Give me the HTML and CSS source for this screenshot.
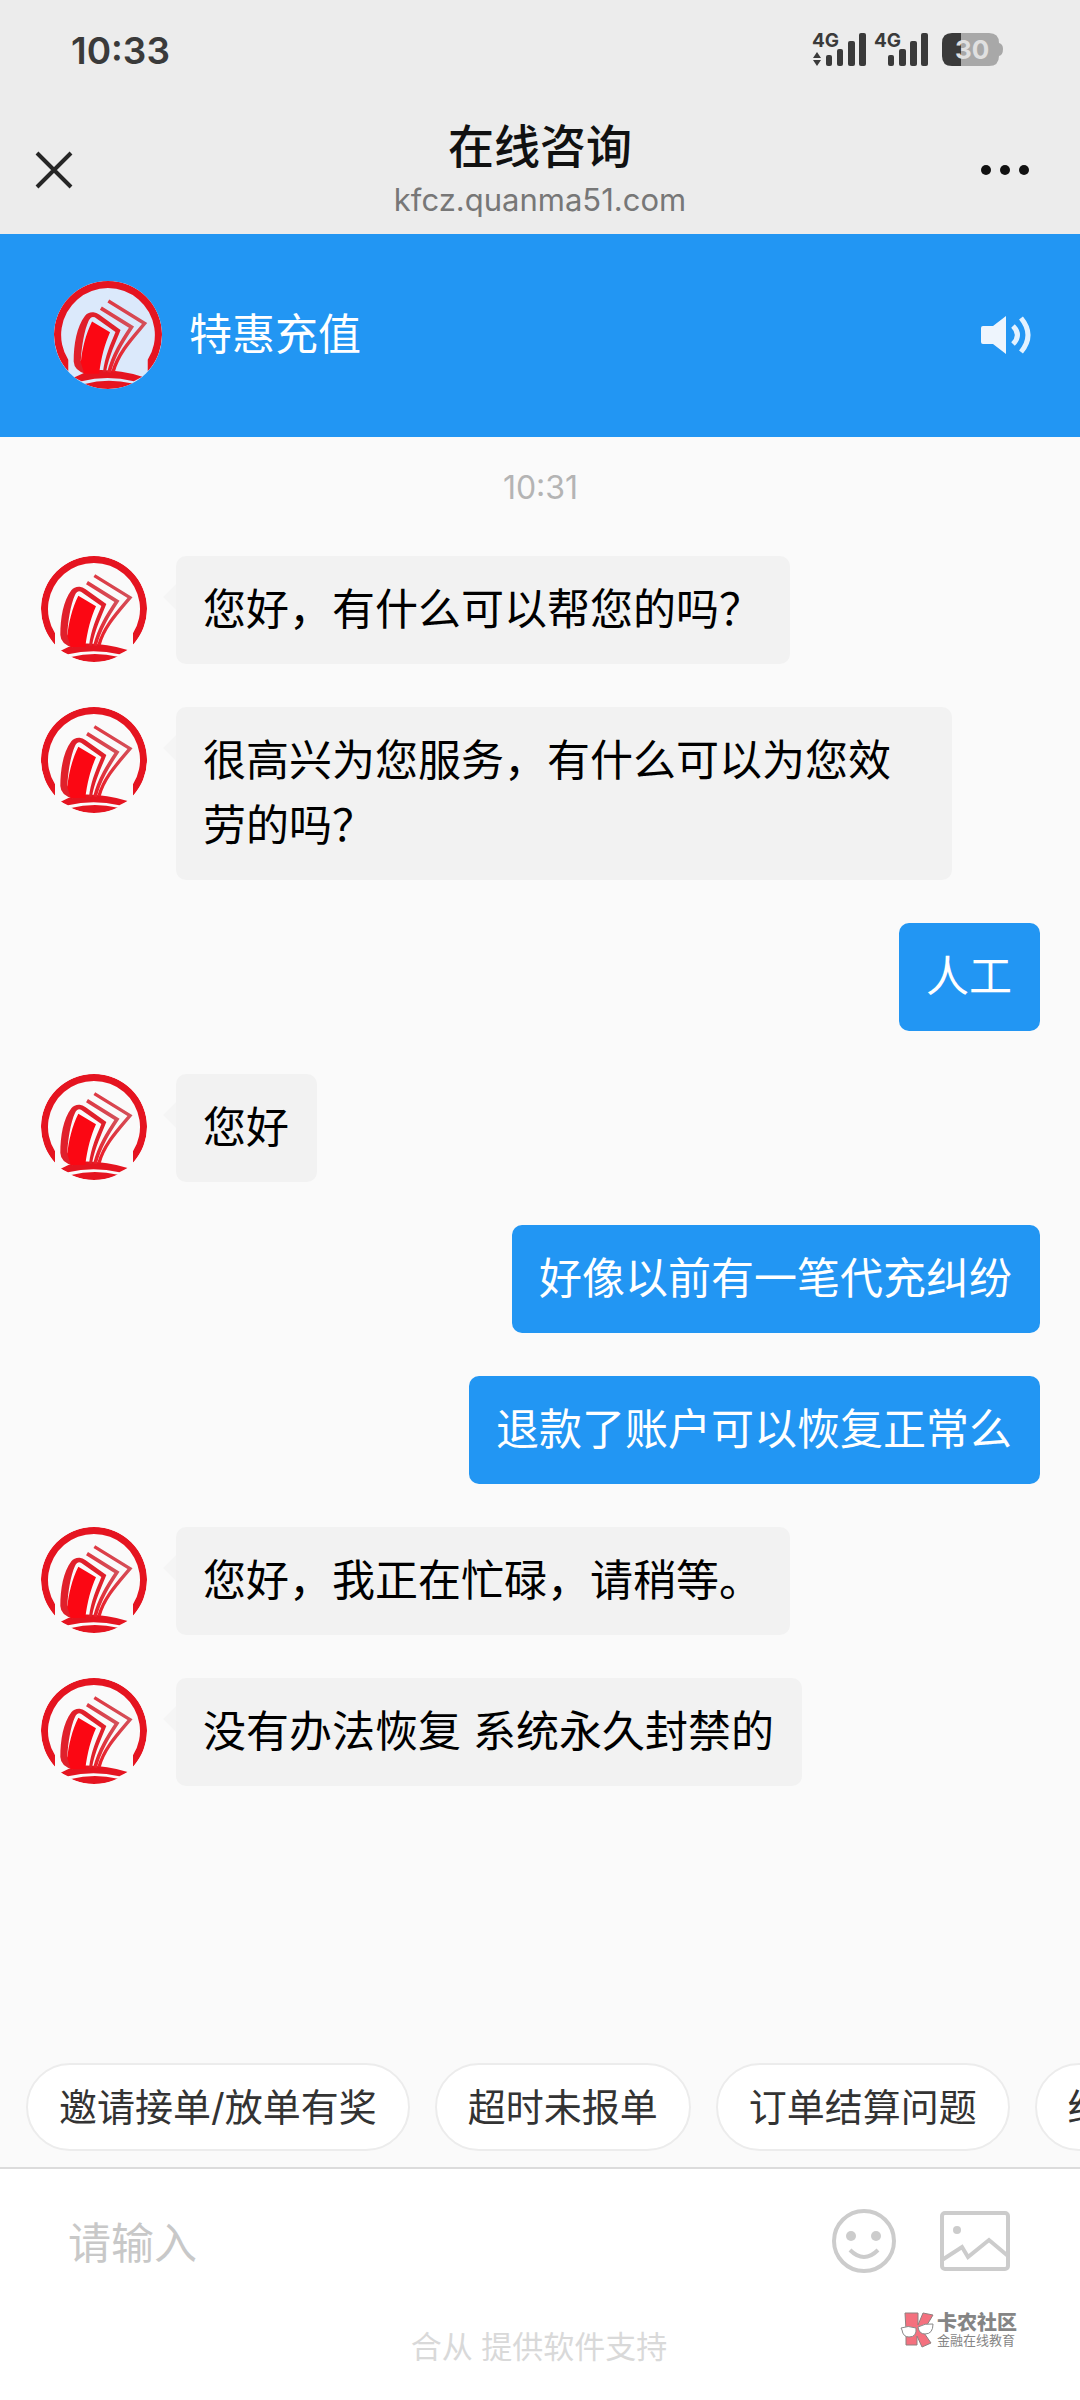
FILE: index.html
```html
<!DOCTYPE html>
<html lang="zh-CN">
<head>
<meta charset="utf-8">
<meta name="viewport" content="width=device-width, initial-scale=1">
<title>在线咨询</title>
<link rel="stylesheet" href="styles.css">
</head>
<body>
<svg class="defs" aria-hidden="true">
  <defs>
    <linearGradient id="page" x1="0" y1="1" x2="1" y2="0">
      <stop offset="0" stop-color="#ee1722"/>
      <stop offset="1" stop-color="#cf5a63"/>
    </linearGradient>
    <symbol id="logo" viewBox="3 15 318 318">
      <path fill="#e51420" d="M45 281A159 159 0 1 1 279 281V247A138 138 0 1 0 45 247Z"/>
      <path fill="#e51420" d="M62 299Q90 284 120 278Q190 274 263 297L238 310Q160 291 84 310Z"/>
      <path fill="#e51420" d="M93 318Q162 300 234 317Q204 333 162 333Q124 333 93 318Z"/>
      <path fill="#e0202b" d="M61 252C61 200 70 150 94 118Q103 106 119 107Q128 108 136 114L199 159C185 195 165 235 156 284L147 284C153 235 170 200 184 165L123 122Q112 117 105 132C92 160 84 210 82 250L100 290Q62 280 61 252Z"/>
      <path fill="#fb0713" d="M115 134L168 166C153 200 142 238 136 288L92 288L82 254C86 215 96 172 115 134Z"/>
      <path fill="none" stroke="url(#page)" stroke-width="11" d="M141 95L231 151C205 190 178 232 165 284"/>
      <path fill="none" stroke="url(#page)" stroke-width="10" d="M163 74L270 140C232 185 192 227 177 282"/>
    </symbol>
  </defs>
</svg>
<div class="app">
  <header class="top">
    <div class="status">
      <span class="clock">10:33</span>
      <svg class="signals" width="192" height="48" viewBox="0 -4 192 48" role="img" aria-label="4G 4G 30">
        <g fill="#3a3a3a">
          <text class="net" x="0" y="17">4G</text>
          <text class="net" x="62" y="17">4G</text>
          <path d="M5 22L9 28H1ZM5 36L9 30H1Z"/>
          <rect x="14" y="25" width="6" height="11" rx="2"/><rect x="25" y="19" width="6" height="17" rx="2"/><rect x="36" y="11" width="7" height="25" rx="2"/><rect x="47" y="3" width="7" height="33" rx="2"/>
          <rect x="76" y="25" width="6" height="11" rx="2"/><rect x="87" y="19" width="7" height="17" rx="2"/><rect x="98" y="11" width="7" height="25" rx="2"/><rect x="109" y="3" width="7" height="33" rx="2"/>
        </g>
        <path fill="#a8a8a8" d="M148 3H177Q187 3 187 13Q191 14 191 19Q191 25 187 26Q187 36 177 36H148Z"/>
        <path fill="#3a3a3a" d="M149 3V36H140Q130 36 130 26V13Q130 3 140 3Z"/>
        <text class="level" x="143" y="29">30</text>
      </svg>
    </div>
    <div class="nav">
      <button class="icon-btn" aria-label="关闭"><svg width="38" height="38" viewBox="0 0 38 38"><path fill="none" stroke="#262626" stroke-width="4" d="M2 2L36 36M36 2L2 36"/></svg></button>
      <div class="heading"><h1>在线咨询</h1><p>kfcz.quanma51.com</p></div>
      <button class="icon-btn more" aria-label="更多"><svg width="48" height="10" viewBox="0 0 48 10" fill="#111"><circle cx="5" cy="5" r="5"/><circle cx="24" cy="5" r="5"/><circle cx="43" cy="5" r="5"/></svg></button>
    </div>
  </header>
  <section class="banner">
    <svg class="avatar on-blue" width="108" height="108"><use href="#logo"/></svg>
    <h2>特惠充值</h2>
    <button class="icon-btn" aria-label="声音"><svg width="51" height="38" viewBox="0 0 51 38"><path fill="#eef5fd" d="M0 12Q0 10 2 10H12L25 0V38L12 28H2Q0 28 0 26Z"/><path fill="none" stroke="#e3f2ff" stroke-width="5" d="M32 10Q41 19 32 28M40 2Q54 19 40 36"/></svg></button>
  </section>
  <main class="chat">
    <time class="stamp">10:31</time>
    <div class="msg"><svg class="avatar" width="106" height="106"><use href="#logo"/></svg><p class="bubble">您好，有什么可以帮您的吗？</p></div>
    <div class="msg"><svg class="avatar" width="106" height="106"><use href="#logo"/></svg><p class="bubble">很高兴为您服务，有什么可以为您效劳的吗？</p></div>
    <div class="msg mine"><p class="bubble">人工</p></div>
    <div class="msg"><svg class="avatar" width="106" height="106"><use href="#logo"/></svg><p class="bubble">您好</p></div>
    <div class="msg mine"><p class="bubble">好像以前有一笔代充纠纷</p></div>
    <div class="msg mine"><p class="bubble">退款了账户可以恢复正常么</p></div>
    <div class="msg"><svg class="avatar" width="106" height="106"><use href="#logo"/></svg><p class="bubble">您好，我正在忙碌，请稍等。</p></div>
    <div class="msg"><svg class="avatar" width="106" height="106"><use href="#logo"/></svg><p class="bubble">没有办法恢复 系统永久封禁的</p></div>
  </main>
  <nav class="chips">
    <button>邀请接单/放单有奖</button><button>超时未报单</button><button>订单结算问题</button><button>结算问题</button>
  </nav>
  <footer class="composer">
    <div class="entry">
      <input type="text" placeholder="请输入" aria-label="请输入">
      <button class="icon-btn" aria-label="表情"><svg width="66" height="66" viewBox="0 0 66 66"><g fill="none" stroke="#ccc" stroke-width="4"><circle cx="33" cy="33" r="30"/><path d="M19 42Q33 56 47 42"/></g><g fill="#ccc"><circle cx="20" cy="28" r="5"/><circle cx="45" cy="28" r="5"/></g></svg></button>
      <button class="icon-btn" aria-label="图片"><svg width="70" height="60" viewBox="0 0 70 60"><g fill="none" stroke="#ccc" stroke-width="4"><rect x="2" y="2" width="66" height="56" rx="3"/><path d="M2 49L22 36L28 46L49 29L68 45"/></g><circle cx="17" cy="19" r="4" fill="#ccc"/></svg></button>
    </div>
    <p class="credit">合从 提供软件支持</p>
    <div class="mark">
      <svg width="34" height="36" viewBox="0 0 34 36"><g fill="#f4707e" stroke="#8f8080" stroke-width="1"><path d="M5 1H18V13L23 1L33 3L27 13L22 18L31 31L22 35L17 24V33H6V18Z"/></g><g fill="#fff" stroke="#8a8a8a" stroke-width="1"><path d="M1 16Q8 13 16 16Q17 25 9 25Q3 25 2 18Z"/><path d="M18 15Q25 11 33 12Q33 22 25 22Q19 22 18 15Z"/></g></svg>
      <div><strong>卡农社区</strong><span>金融在线教育</span></div>
    </div>
  </footer>
</div>
</body>
</html>
```
FILE: styles.css
```css
* { box-sizing: border-box; margin: 0; padding: 0; }
body { font-family: Inter, "Noto Sans CJK SC", sans-serif; background: #fafafa; color: #000; }
button, input { font: inherit; border: 0; background: none; }
.defs { position: absolute; width: 0; height: 0; }
.app { display: flex; flex-direction: column; min-height: 100vh; }

.top { background: #ececec; color: #111; padding-bottom: 11px; }
.status { display: flex; justify-content: space-between; align-items: center; height: 100px; padding: 0 76px 0 71px; }
.clock { font-size: 37px; font-weight: 600; color: #3a3a3a; }
.net { font-size: 19px; font-weight: 700; }
.level { font-size: 26px; font-weight: 700; fill: #e0e0e0; }
.nav { display: grid; grid-template-columns: 1fr auto 1fr; align-items: end; padding: 0 35px; }
.nav .icon-btn { height: 106px; }
.nav .more { justify-self: end; padding-right: 16px; }
.icon-btn { display: flex; align-items: center; flex: none; }
.heading { text-align: center; padding: 14px 0 2px; }
.heading h1 { font-size: 46px; font-weight: 500; line-height: 65px; }
.heading p { font-size: 31px; line-height: 42px; color: #777; }

.banner { display: flex; align-items: center; gap: 27px; height: 203px; padding: 0 48px 2px 54px; background: #2296f3; color: #fff; }
.banner h2 { flex: 1; font-size: 43px; font-weight: 400; line-height: 64px; padding-bottom: 2px; }
.avatar { flex: none; border-radius: 50%; }
.on-blue { background: #dbe9fb; }

.chat { flex: 1; display: flex; flex-direction: column; gap: 43px; padding: 26px 40px 43px 41px; }
.stamp { text-align: center; font-size: 32px; line-height: 50px; color: #b4b4b4; }
.msg { display: flex; gap: 29px; }
.mine { justify-content: flex-end; }
.bubble { position: relative; max-width: 776px; padding: 21px 28px 22px 27px; border-radius: 10px; background: #f2f2f2; font-size: 43px; line-height: 65px; }
.msg:not(.mine) .bubble::before { content: ""; position: absolute; left: -13px; top: 28px; border: solid transparent; border-width: 13px 13px 13px 0; border-right-color: #f5f5f5; }
.mine .bubble { background: #2296f3; color: #fff; }

.chips { display: flex; gap: 25px; padding: 0 26px 16px; overflow: hidden; }
.chips button { flex: none; height: 88px; padding: 0 31px 6px; border: 2px solid #ececec; border-radius: 44px; background: #fff; color: #333; font-size: 38px; white-space: nowrap; }

.composer { position: relative; background: #fff; border-top: 2px solid #dcdcdc; padding: 32px 70px 29px 68px; }
.entry { display: flex; align-items: center; gap: 43px; height: 80px; }
.entry input { flex: 1; min-width: 0; height: 80px; font-size: 43px; outline: 0; padding-top: 4px; }
.entry input::placeholder { color: #c8c8c8; }
.credit { margin-top: 42px; text-align: center; font-size: 31px; line-height: 48px; color: #d9d9d9; }
.mark { position: absolute; right: 63px; bottom: 52px; display: flex; align-items: center; gap: 3px; color: #858585; }
.mark strong { display: block; font-size: 20px; font-weight: 900; line-height: 20px; }
.mark span { display: block; font-size: 13px; line-height: 14px; }
```
